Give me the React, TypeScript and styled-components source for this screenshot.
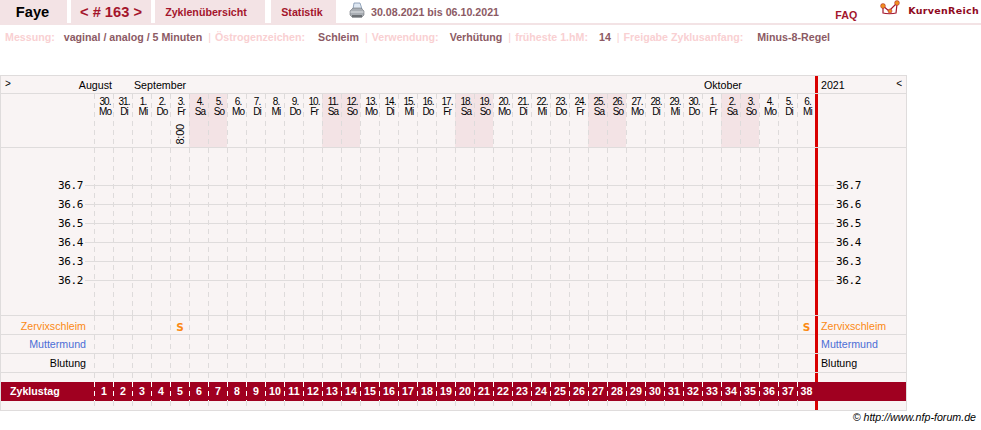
import React from "react";
import styled, { createGlobalStyle } from "styled-components";

const Global = createGlobalStyle`
  html, body { margin: 0; padding: 0; background: #fff; }
  body { font-family: "Liberation Sans", Arial, sans-serif; font-size: 10.67px; color: #000; overflow: hidden; }
`;

const COLS = "93px repeat(37, 19px) 18px 3px 88px";
const LINE = "#dfdcdc";
const BG = "#f9f4f4";
const RED = "#d90000";
const PINK = "#f3e3e5";

const Page = styled.div`
  width: 981px;
  height: 430px;
  display: flex;
  flex-direction: column;
`;

const TopBar = styled.header`
  height: 23px;
  border-bottom: 2px solid ${PINK};
  display: flex;
  align-items: stretch;
`;

const Tab = styled.div<{ $w: number; $gap?: number; $size?: number; $dark?: boolean; $pad?: number }>`
  width: ${(p) => p.$w}px;
  box-sizing: border-box;
  padding-right: ${(p) => p.$pad ?? 0}px;
  margin-right: ${(p) => p.$gap ?? 4}px;
  background: ${PINK};
  display: flex;
  align-items: center;
  justify-content: center;
  font-weight: bold;
  font-size: ${(p) => p.$size ?? 10.67}px;
  color: ${(p) => (p.$dark ? "#000" : "#a4152c")};
`;

const PrintIcon = styled.svg`
  width: 16px;
  height: 17px;
  margin: 2px 6px 0 13px;
  flex: none;
`;

const DateRange = styled.div`
  display: flex;
  align-items: center;
  font-weight: bold;
  color: #8c5a64;
`;

const TopRight = styled.div`
  margin-left: auto;
  display: flex;
  align-items: flex-start;
`;

const Faq = styled.div`
  font-weight: bold;
  color: #a4152c;
  margin: 9px 23px 0 0;
`;

const Logo = styled.svg`
  width: 22px;
  height: 18px;
  margin: 0 6px 0 0;
`;

const Brand = styled.div`
  font-family: "DejaVu Sans", Verdana, sans-serif;
  font-weight: bold;
  font-size: 9.5px;
  color: #8f0a1e;
  margin: 5px 2px 0 0;
  letter-spacing: 0.3px;
`;

const Meta = styled.div`
  height: 23px;
  display: flex;
  align-items: center;
  padding-left: 5px;
  font-weight: bold;
  white-space: nowrap;
`;

const MetaLabel = styled.span<{ $gap?: number }>`
  color: #f9d0d2;
  margin-right: ${(p) => p.$gap ?? 11}px;
`;

const MetaValue = styled.span`
  color: #8c5a64;
  margin-right: 6px;
`;

const MetaSep = styled.span`
  color: #f9d0d2;
  font-weight: normal;
  margin-right: 4px;
`;

const Chart = styled.section`
  margin-top: 27px;
  width: 905px;
  border: 1px solid ${LINE};
  background: ${BG};
`;

const Row = styled.div<{ $h: number; $noLine?: boolean }>`
  display: grid;
  grid-template-columns: ${COLS};
  height: ${(p) => p.$h}px;
  border-bottom: ${(p) => (p.$noLine ? "none" : `1px solid ${LINE}`)};
  box-sizing: content-box;
`;

const Day = styled.div<{ $weekend?: boolean; $lines?: boolean; $white?: boolean }>`
  display: flex;
  flex-direction: column;
  align-items: center;
  min-width: 0;
  background-color: ${(p) => (p.$weekend ? PINK : "transparent")};
  background-image: ${(p) =>
    [
      p.$lines
        ? `repeating-linear-gradient(to bottom, ${LINE} 0 1px, transparent 1px 19px)`
        : null,
      `repeating-linear-gradient(to bottom, ${p.$white ? "#fff" : "#dedbdb"} 0 5px, transparent 5px 9px)`,
    ]
      .filter(Boolean)
      .join(",")};
  background-repeat: no-repeat;
  background-size: ${(p) => (p.$lines ? "100% 96px, 1px 100%" : "1px 100%")};
  background-position: ${(p) => (p.$lines ? "0 37px, 0 0" : "0 0")};
`;

const RedRule = styled.div`
  background: ${RED};
`;

const MonthCell = styled.div<{ $from: number; $to: number; $end?: boolean }>`
  grid-column: ${(p) => p.$from} / ${(p) => p.$to};
  display: flex;
  align-items: center;
  justify-content: space-between;
  padding: ${(p) => (p.$end ? "1px 1px 0 0" : "1px 0 0 2px")};
  white-space: nowrap;
`;

const Arrow = styled.span`
  font-size: 10px;
  margin: -3px 0 0 4px;
  align-self: center;
`;

const RightHead = styled.div`
  grid-column: 41;
  display: flex;
  align-items: center;
  justify-content: space-between;
  padding: 1px 4px 0 3px;
`;

const HeadRule = styled(RedRule)`
  grid-column: 40;
`;

const DateNum = styled.div`
  font-size: 10px;
  line-height: 10px;
  letter-spacing: -0.9px;
  margin-top: 3px;
  padding-left: 3px;
`;

const Weekday = styled(DateNum)`
  margin-top: 0;
`;

const Time = styled.div`
  margin: auto 0 2px 1px;
  writing-mode: vertical-rl;
  transform: rotate(180deg);
  font-size: 11px;
  line-height: 11px;
  letter-spacing: -0.2px;
`;

const TempCol = styled.div`
  padding-top: 28px;
  display: flex;
  flex-direction: column;
`;

const TempRow = styled.div<{ $right?: boolean }>`
  height: 19px;
  display: flex;
  align-items: center;
  gap: 2px;
  justify-content: ${(p) => (p.$right ? "flex-start" : "flex-end")};
`;

const TempLabel = styled.span`
  font-family: "DejaVu Sans Mono", monospace;
  font-size: 11px;
  line-height: 19px;
  letter-spacing: -0.35px;
`;

const Tick = styled.i<{ $w: number }>`
  display: block;
  width: ${(p) => p.$w}px;
  height: 1px;
  background: ${LINE};
  flex: none;
`;

const SideLabel = styled.div<{ $color: string; $right?: boolean }>`
  color: ${(p) => p.$color};
  display: flex;
  align-items: center;
  justify-content: ${(p) => (p.$right ? "flex-start" : "flex-end")};
  padding: ${(p) => (p.$right ? "0 0 1px 3px" : "0 8px 1px 0")};
`;

const Mark = styled.span`
  font-family: "DejaVu Sans", sans-serif;
  font-weight: bold;
  font-size: 10.5px;
  line-height: 19px;
  color: #fb8a14;
  padding: 2px 0 0 1px;
`;

const BarRow = styled.div`
  display: grid;
  grid-template-columns: ${COLS};
  height: 19px;
  background: #a00020;
  color: #fff;
  font-weight: bold;
  line-height: 19px;
`;

const BarTitle = styled.div`
  padding-left: 9px;
`;

const BarNum = styled.span`
  padding-left: 1px;
`;

const Copy = styled.div`
  width: 976px;
  text-align: right;
  font-style: italic;
`;

type D = { d: number; w: string };
const names = ["Mo", "Di", "Mi", "Do", "Fr", "Sa", "So"];
const lens = [31, 30, 31];
const days: D[] = [];
{
  let d = 30;
  let m = 0;
  for (let i = 0; i < 38; i++) {
    days.push({ d, w: names[i % 7] });
    d++;
    if (d > lens[m]) {
      d = 1;
      m++;
    }
  }
}
const isWeekend = (i: number) => i % 7 === 5 || i % 7 === 6;
const temps = ["36.7", "36.6", "36.5", "36.4", "36.3", "36.2"];

const Cells = ({ marks }: { marks?: number[] }) => (
  <>
    {days.map((_, i) => (
      <Day key={i}>{marks?.includes(i) ? <Mark>S</Mark> : null}</Day>
    ))}
  </>
);

const Side = ({ text, color, marks }: { text: string; color: string; marks?: number[] }) => (
  <Row $h={18}>
    <SideLabel $color={color}>{text}</SideLabel>
    <Cells marks={marks} />
    <RedRule />
    <SideLabel $color={color} $right>
      {text}
    </SideLabel>
  </Row>
);

const Spacer = () => (
  <Row $h={9} $noLine>
    <div />
    <Cells />
    <RedRule />
    <div />
  </Row>
);

export default function App() {
  return (
    <Page>
      <Global />
      <TopBar>
        <Tab $w={67} $size={14.67} $pad={2} $dark>
          Faye
        </Tab>
        <Tab $w={80} $size={14.67}>
          &lt; # 163 &gt;
        </Tab>
        <Tab $w={110} $gap={6} $pad={8}>
          Zyklenübersicht
        </Tab>
        <Tab $w={65} $gap={0} $pad={3}>
          Statistik
        </Tab>
        <PrintIcon viewBox="0 0 16 17">
          <path d="M5 1h6l2 6H4z" fill="#dfe8f2" stroke="#7d93ad" strokeWidth="0.8" />
          <path d="M1 9l3-3h8l3 3v4l-2 2H3l-2-2z" fill="#a9aeb4" stroke="#6f7379" strokeWidth="0.6" />
          <path d="M1.5 10h13" stroke="#dfe2e5" strokeWidth="1" />
          <path d="M3 13h10v2.5H3z" fill="#6c7074" />
        </PrintIcon>
        <DateRange>30.08.2021 bis 06.10.2021</DateRange>
        <TopRight>
          <Faq>FAQ</Faq>
          <Logo viewBox="0 0 22 18">
            <path d="M3 6v7c3 1 10 1 13 0l1-9" fill="none" stroke="#a4152c" strokeWidth="1.2" />
            <path d="M3 6l6 5 8-8" fill="none" stroke="#a4152c" strokeWidth="1.2" />
            <circle cx="3" cy="6" r="2.4" fill="#f09020" stroke="#a4152c" strokeWidth="0.5" />
            <circle cx="10" cy="11" r="2" fill="#f09020" stroke="#a4152c" strokeWidth="0.5" />
            <circle cx="17" cy="3" r="2.4" fill="#f09020" stroke="#a4152c" strokeWidth="0.5" />
          </Logo>
          <Brand>KurvenReich</Brand>
        </TopRight>
      </TopBar>
      <Meta>
        <MetaLabel $gap={9}>Messung:</MetaLabel>
        <MetaValue>vaginal / analog / 5 Minuten</MetaValue>
        <MetaSep>|</MetaSep>
        <MetaLabel $gap={13}>Östrogenzeichen:</MetaLabel>
        <MetaValue>Schleim</MetaValue>
        <MetaSep>|</MetaSep>
        <MetaLabel>Verwendung:</MetaLabel>
        <MetaValue>Verhütung</MetaValue>
        <MetaSep>|</MetaSep>
        <MetaLabel>früheste 1.hM:</MetaLabel>
        <MetaValue>14</MetaValue>
        <MetaSep>|</MetaSep>
        <MetaLabel $gap={14}>Freigabe Zyklusanfang:</MetaLabel>
        <MetaValue>Minus-8-Regel</MetaValue>
      </Meta>
      <Chart>
        <Row $h={17}>
          <MonthCell $from={1} $to={3} $end>
            <Arrow>&gt;</Arrow>
            <span>August</span>
          </MonthCell>
          <MonthCell $from={4} $to={10}>
            September
          </MonthCell>
          <MonthCell $from={34} $to={40}>
            Oktober
          </MonthCell>
          <HeadRule />
          <RightHead>
            <span>2021</span>
            <Arrow>&lt;</Arrow>
          </RightHead>
        </Row>
        <Row $h={53}>
          <div />
          {days.map((x, i) => (
            <Day key={i} $weekend={isWeekend(i)}>
              <DateNum>{x.d}.</DateNum>
              <Weekday>{x.w}</Weekday>
              {i === 4 ? <Time>8:00</Time> : null}
            </Day>
          ))}
          <RedRule />
          <div />
        </Row>
        <Row $h={167}>
          <TempCol>
            {temps.map((t) => (
              <TempRow key={t}>
                <TempLabel>{t}</TempLabel>
                <Tick $w={9} />
              </TempRow>
            ))}
          </TempCol>
          {days.map((_, i) => (
            <Day key={i} $lines />
          ))}
          <RedRule />
          <TempCol>
            {temps.map((t) => (
              <TempRow key={t} $right>
                <Tick $w={16} />
                <TempLabel>{t}</TempLabel>
              </TempRow>
            ))}
          </TempCol>
        </Row>
        <Side text="Zervixschleim" color="#fb8a14" marks={[4, 37]} />
        <Side text="Muttermund" color="#4c6ed6" />
        <Side text="Blutung" color="#000" />
        <Spacer />
        <BarRow>
          <BarTitle>Zyklustag</BarTitle>
          {days.map((_, i) => (
            <Day key={i} $white>
              <BarNum>{i + 1}</BarNum>
            </Day>
          ))}
          <div />
          <div />
        </BarRow>
        <Spacer />
      </Chart>
      <Copy>© http://www.nfp-forum.de</Copy>
    </Page>
  );
}
